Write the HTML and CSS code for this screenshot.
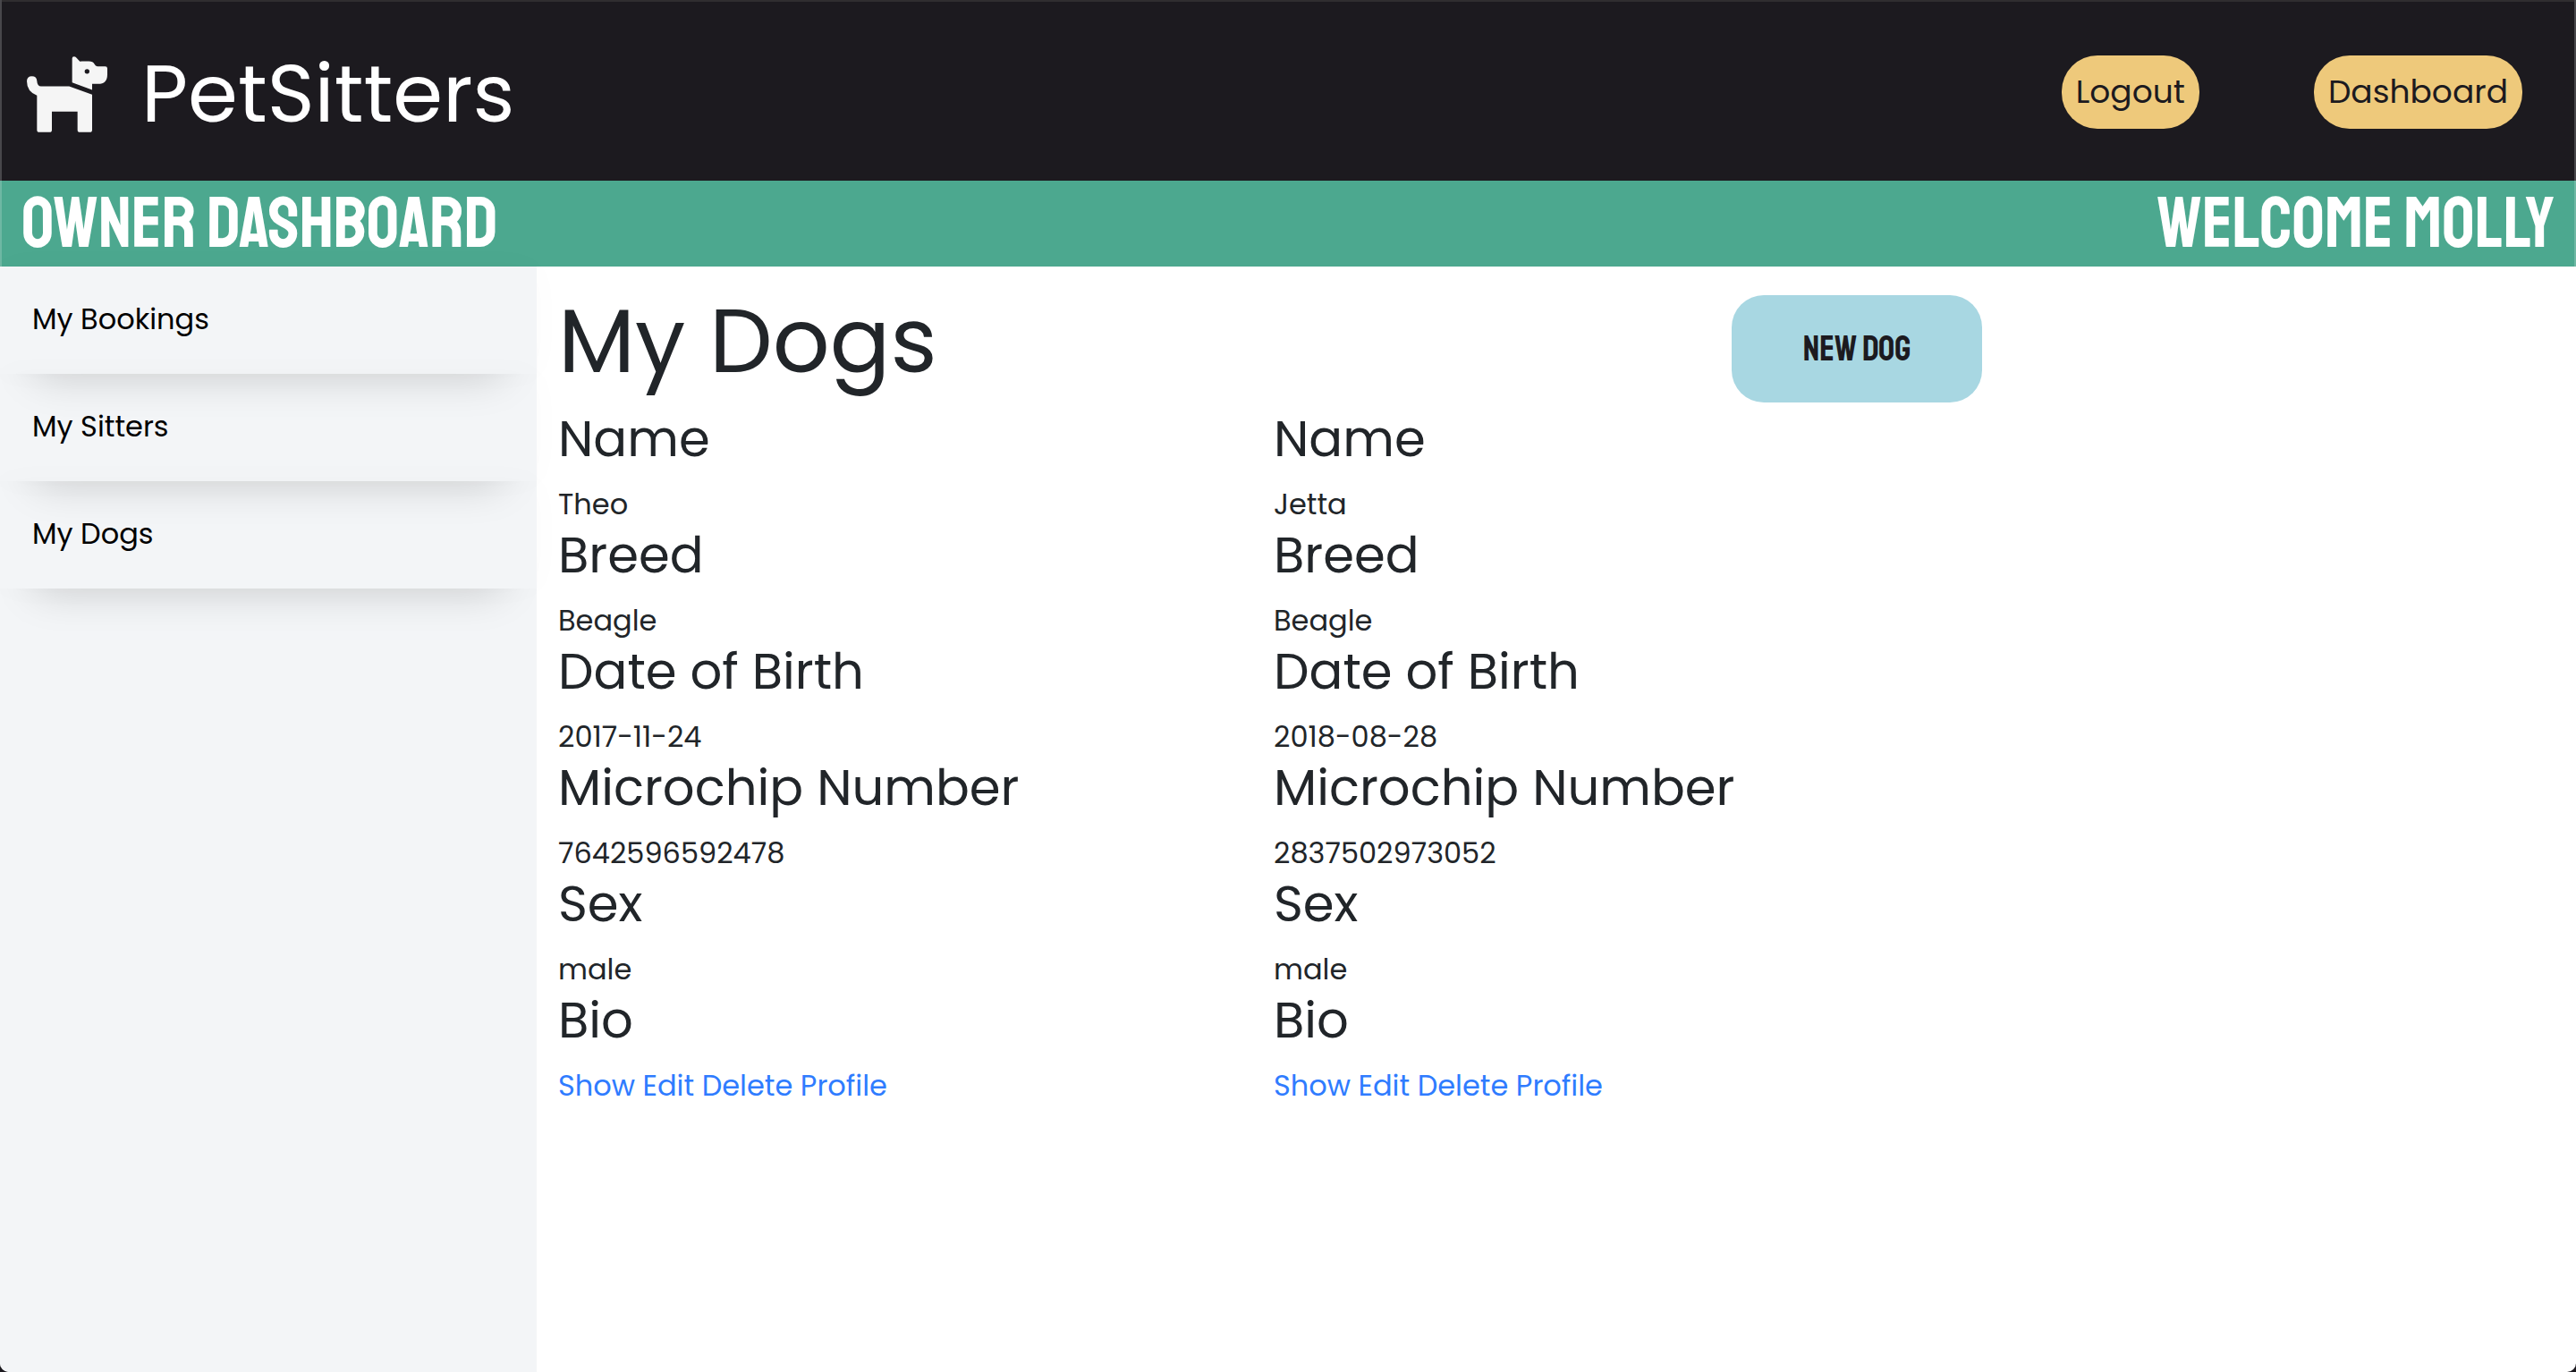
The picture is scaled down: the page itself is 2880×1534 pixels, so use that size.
FILE: index.html
```html
<!DOCTYPE html>
<html lang="en">
<head>
<meta charset="utf-8">
<meta name="viewport" content="width=device-width, initial-scale=1">
<title>PetSitters</title>
<link rel="stylesheet" href="styles.css">
</head>
<body>
<div class="page">
  <header class="topbar">
    <a class="brand" href="#">
      <svg class="brand-icon" viewBox="30 39 270 254" aria-hidden="true">
        <path fill="#f5f5f5" d="M182 45q0-6 6-6 5 0 8 4l12 13q3-1 7-1h23q14 0 19 10 3 7 10 7h26q7 0 7 7v20q0 32-31 32h-20v20l-67-25zM30 122q0-17 17-17 16 0 17 16 1 18 14 18h94l77 28v118q0 8-8 8h-33q-8 0-8-8v-61h-86v61q0 8-8 8h-34q-8 0-8-8V170q-34-13-34-48z"/>
        <circle cx="232" cy="89" r="8" fill="#1c1a1f"/>
      </svg>
      <span class="brand-name">PetSitters</span>
    </a>
    <nav class="actions">
      <a class="pill" href="#">Logout</a>
      <a class="pill" href="#">Dashboard</a>
    </nav>
  </header>
  <div class="banner">
    <h2 class="banner-title">OWNER DASHBOARD</h2>
    <h2 class="banner-title">WELCOME MOLLY</h2>
  </div>
  <div class="body">
    <nav class="sidebar">
      <a class="side-link" href="#">My Bookings</a>
      <a class="side-link" href="#">My Sitters</a>
      <a class="side-link" href="#">My Dogs</a>
    </nav>
    <main class="content">
      <div class="content-head">
        <h1 class="title">My Dogs</h1>
        <button class="new-dog" type="button">NEW DOG</button>
      </div>
      <div class="dogs">
        <section class="dog">
          <h3>Name</h3>
          <p>Theo</p>
          <h3>Breed</h3>
          <p>Beagle</p>
          <h3>Date of Birth</h3>
          <p>2017-11-24</p>
          <h3>Microchip Number</h3>
          <p>7642596592478</p>
          <h3>Sex</h3>
          <p>male</p>
          <h3>Bio</h3>
          <p><a href="#">Show</a> <a href="#">Edit</a> <a href="#">Delete Profile</a></p>
        </section>
        <section class="dog">
          <h3>Name</h3>
          <p>Jetta</p>
          <h3>Breed</h3>
          <p>Beagle</p>
          <h3>Date of Birth</h3>
          <p>2018-08-28</p>
          <h3>Microchip Number</h3>
          <p>2837502973052</p>
          <h3>Sex</h3>
          <p>male</p>
          <h3>Bio</h3>
          <p><a href="#">Show</a> <a href="#">Edit</a> <a href="#">Delete Profile</a></p>
        </section>
      </div>
    </main>
  </div>
</div>
</body>
</html>
```
FILE: styles.css
```css
* {
  box-sizing: border-box;
  margin: 0;
}

body {
  background: #1c1a1f;
  color: #212529;
  font-family: Poppins, Inter, sans-serif;
  font-size: 32px;
  line-height: 48px;
}

a {
  color: #2f7cff;
  text-decoration: none;
}

.page {
  display: flex;
  flex-direction: column;
  min-height: 100vh;
  overflow: hidden;
  border-radius: 0 0 10px 10px;
  background: #fff;
}

.topbar {
  display: flex;
  align-items: center;
  justify-content: space-between;
  padding: 42px 60px 38px 30px;
  background: #1c1a1f;
  box-shadow: inset 2px 0 #48474b, inset -2px 0 #48474b, inset 0 2px #302e30;
}

.brand {
  display: flex;
  align-items: center;
  gap: 38px;
  padding-top: 4px;
}

.brand-icon {
  width: 90px;
  height: 85px;
}

.brand-name {
  color: #fff;
  font-size: 90px;
  line-height: 118px;
}

.actions {
  display: flex;
  gap: 128px;
}

.pill {
  padding: 16px;
  border-radius: 40px;
  background: #eec97b;
  color: #1c1a1f;
  font-size: 36px;
  line-height: 50px;
}

.banner {
  display: flex;
  justify-content: space-between;
  padding: 2px 24px;
  background: #4ca88f;
  box-shadow: inset 2px 0 #6eb8a4, inset -2px 0 #6eb8a4;
}

.banner-title {
  color: #fff;
  font-family: Staatliches, "Liberation Sans Narrow", "Liberation Sans", sans-serif;
  font-size: 80px;
  font-weight: 400;
  line-height: 92px;
}

.body {
  display: flex;
  flex: 1;
}

.sidebar {
  flex: 0 0 600px;
  background: #f3f5f7;
}

.side-link {
  display: block;
  padding: 35px 36px 37px;
  color: #000;
  box-shadow: 0 42px 48px -40px rgba(0, 0, 0, 0.18), 0 0 40px rgba(0, 0, 0, 0.02);
}

.content {
  flex: 1;
  padding: 24px;
}

.content-head {
  display: flex;
  align-items: flex-start;
  justify-content: space-between;
  max-width: 1600px;
  padding: 0 8px 8px 0;
}

.title {
  font-size: 100px;
  font-weight: 400;
  line-height: 118px;
}

.new-dog {
  width: 280px;
  height: 120px;
  margin-top: 8px;
  border: 0;
  border-radius: 36px;
  background: #a8d7e2;
  color: #1c1a1f;
  font-family: Staatliches, "Liberation Sans Narrow", "Liberation Sans", sans-serif;
  font-size: 40px;
  font-weight: 400;
}

.dogs {
  display: grid;
  grid-template-columns: 1fr 1fr;
  max-width: 1600px;
}

.dog h3 {
  margin-bottom: 16px;
  font-size: 56px;
  font-weight: 400;
  line-height: 66px;
}
```
